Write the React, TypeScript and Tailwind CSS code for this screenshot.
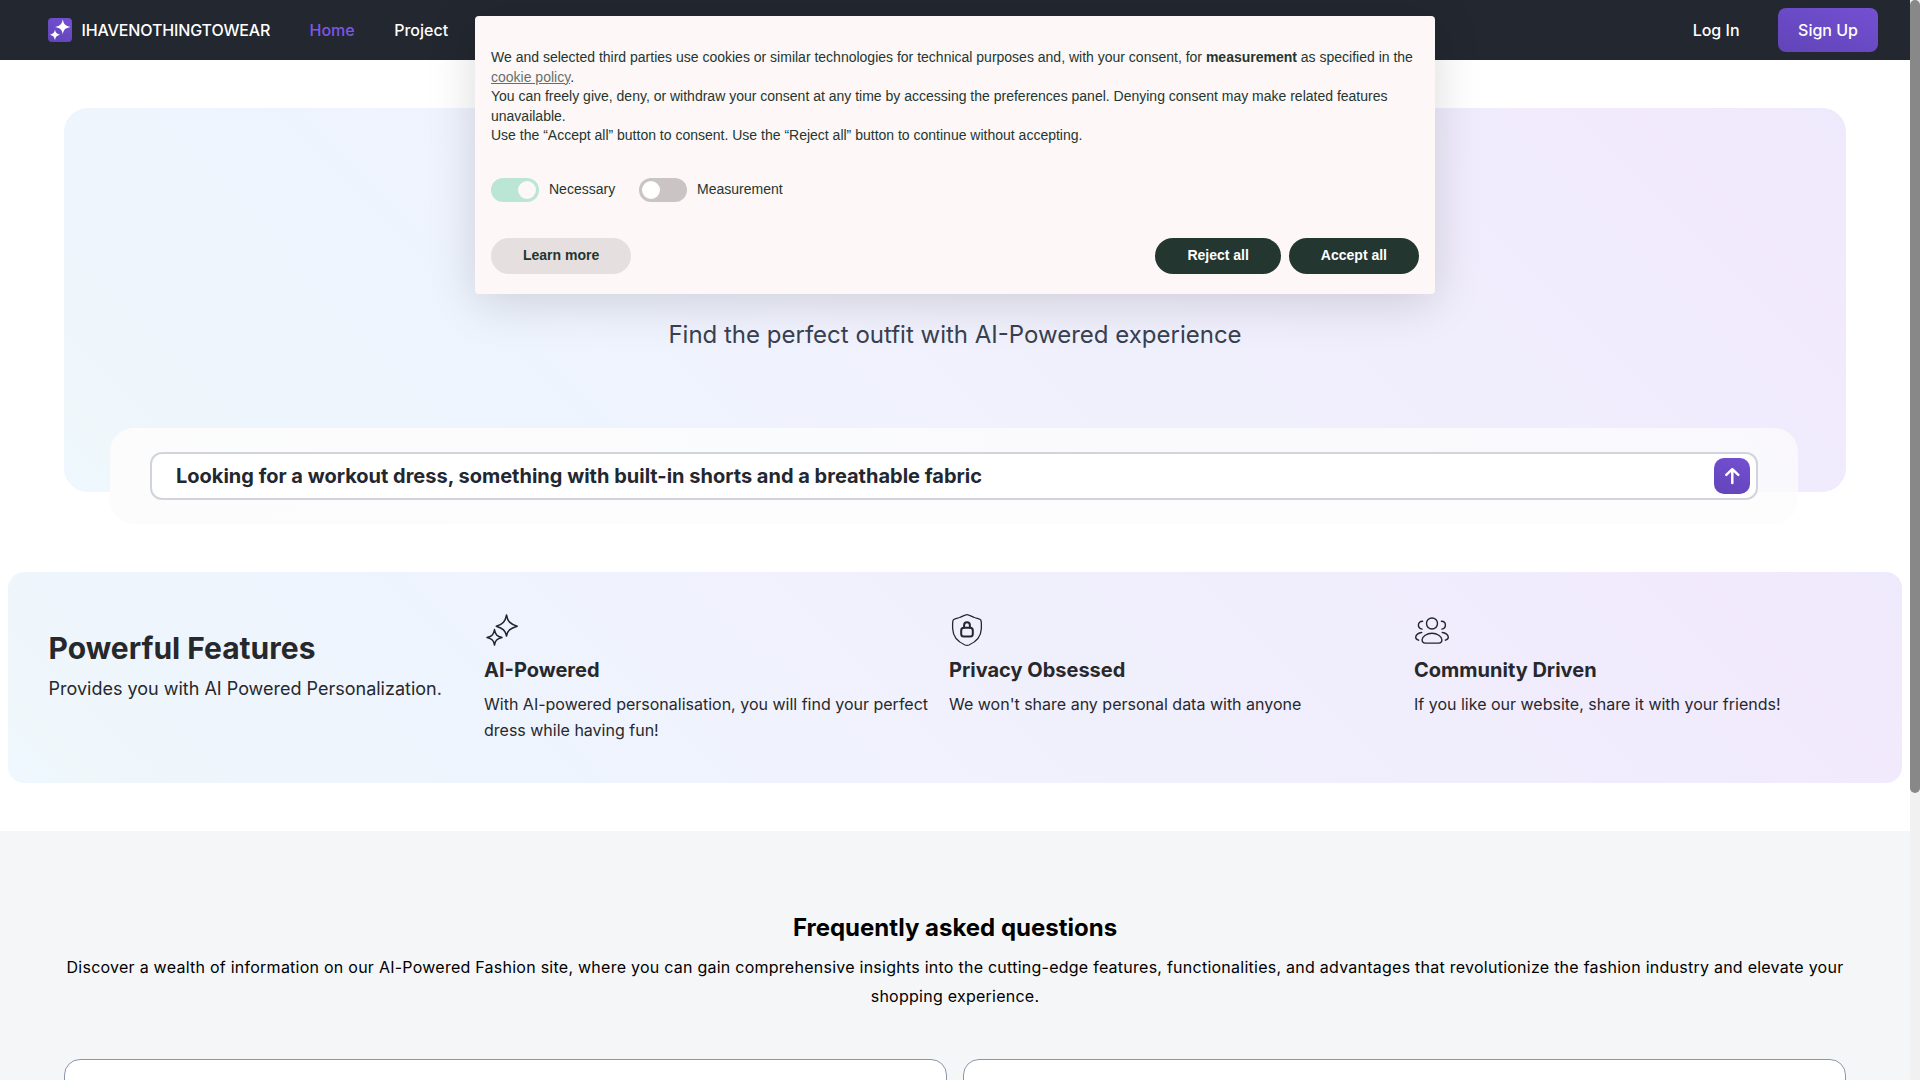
import type { ReactNode } from "react";

const panelGradient =
  "bg-[linear-gradient(45deg,#eef8fe_0%,#eff7fb_4%,#eef6fd_12%,#eef4fd_28%,#f0f2fd_42%,#f0effc_60%,#f0ecfd_80%,#f2eafc_90%,#efe9fd_100%)]";

function LogoMark() {
  return (
    <span className="flex size-6 items-center justify-center rounded-[4px] bg-[linear-gradient(20deg,#6244b8,#7350d2)]">
      <svg viewBox="0 0 24 24" className="size-6" fill="#fff">
        <path d="M14.8 1.3C15.5 5.9 17.2 7.9 22.6 8.9C17.2 9.8 15.5 11.7 14.8 16.4C14.1 11.7 12.2 9.8 7.1 8.9C12.2 7.9 14.1 5.9 14.8 1.3Z" />
        <path d="M7 11.2C7.5 14.6 8.7 15.9 12.5 16.7C8.7 17.4 7.5 18.9 7 22.5C6.5 18.9 5.2 17.4 1.5 16.7C5.2 15.9 6.5 14.6 7 11.2Z" />
      </svg>
    </span>
  );
}

function SparkleIcon() {
  return (
    <svg viewBox="0 0 36 36" className="size-9" fill="none" stroke="#22262f" strokeWidth="1.5" strokeLinejoin="round">
      <path d="M22.5 3C23.6 9.3 26 12 33.2 14.2C26 16.4 23.6 18.6 22.5 24C21.4 18.6 19 16.4 12.3 14.2C19 12 21.4 9.3 22.5 3Z" />
      <path d="M10.5 17.6C11.3 22.4 12.9 24.3 18 25.5C12.9 26.7 11.3 28.5 10.5 33C9.7 28.5 8.1 26.7 3 25.5C8.1 24.3 9.7 22.4 10.5 17.6Z" />
    </svg>
  );
}

function ShieldLockIcon() {
  return (
    <svg viewBox="0 0 36 36" className="size-9" fill="none" stroke="#22262f" strokeLinecap="round" strokeLinejoin="round">
      <path
        strokeWidth="1.3"
        d="M18 2.7C16.4 2.7 13.5 4.3 10.5 5.5C7.5 6.6 4.8 6.8 4.2 8C3.5 9.7 3.5 13 3.7 17C4.1 26.4 11.5 31 16 33C17.3 33.5 18.7 33.5 20 33C24.5 31 31.9 26.4 32.3 17C32.5 13 32.5 9.7 31.8 8C31.2 6.8 28.5 6.6 25.5 5.5C22.5 4.3 19.6 2.7 18 2.7Z"
      />
      <rect x="12.2" y="15.8" width="11.6" height="8.8" rx="2.6" strokeWidth="2" />
      <path strokeWidth="2" d="M15.1 15.4V13.2A2.9 3 0 0 1 20.9 13.2V15.4" />
    </svg>
  );
}

function CommunityIcon() {
  return (
    <svg viewBox="0 0 36 36" className="size-9" fill="none" stroke="#22262f" strokeWidth="1.4" strokeLinecap="round">
      <circle cx="18" cy="11.5" r="5.5" />
      <path d="M18 21.2C23 21.2 27.9 24.5 27.9 27.7C27.9 29.6 26.5 31.1 24.6 31.1H11.4C9.5 31.1 8.1 29.6 8.1 27.7C8.1 24.5 13 21.2 18 21.2Z" />
      <path d="M8.6 9.2C6.2 9.2 4.4 10.9 4.4 13.1C4.4 15.2 5.9 16.9 8.1 17.1" />
      <path d="M27.4 9.2C29.8 9.2 31.4 10.9 31.4 13.1C31.4 15.2 30 16.9 27.9 17.1" />
      <path d="M7.7 20.5C4.4 20.8 1.7 23 1.7 25.3C1.7 26.7 2.8 27.7 4.6 28.2" />
      <path d="M28.3 20.5C31.6 20.8 34.3 23 34.3 25.3C34.3 26.7 33.2 27.7 31.4 28.2" />
    </svg>
  );
}

function Feature({ icon, title, text }: { icon: ReactNode; title: string; text: string }) {
  return (
    <div className="flex flex-col text-[#27282c]">
      {icon}
      <h3 className="mt-2 text-xl font-bold">{title}</h3>
      <p className="mt-[7px] text-base leading-[26px]">{text}</p>
    </div>
  );
}

function CookieBanner() {
  return (
    <div className="absolute left-[475px] top-4 flex h-[278px] w-[960px] flex-col rounded-[4px] bg-[#fdf7f7] px-4 pt-8 font-['Liberation_Sans',Arial,sans-serif] text-sm text-[#233630] shadow-[0_8px_48px_rgba(0,0,0,0.15)]">
      <div className="leading-[19.6px]">
        <p>
          We and selected third parties use cookies or similar technologies for technical purposes and, with your
          consent, for <strong>measurement</strong> as specified in the{" "}
          <a className="underline opacity-70">cookie policy</a>.
        </p>
        <p>
          You can freely give, deny, or withdraw your consent at any time by accessing the preferences panel. Denying
          consent may make related features unavailable.
        </p>
        <p>Use the “Accept all” button to consent. Use the “Reject all” button to continue without accepting.</p>
      </div>
      <div className="mt-8 flex h-6 items-center">
        <span className="flex h-6 w-12 items-center justify-end rounded-full bg-[#bbe6d5] px-[3px]">
          <span className="size-[18px] rounded-full bg-[#fdf7f7]" />
        </span>
        <span className="ml-[10px] w-20 -translate-y-px">Necessary</span>
        <span className="ml-[10px] flex h-6 w-12 items-center rounded-full bg-[#cac4c4] px-[3px]">
          <span className="size-[18px] rounded-full bg-white" />
        </span>
        <span className="ml-[10px] -translate-y-px">Measurement</span>
      </div>
      <div className="mt-9 flex gap-2 font-bold">
        <button className="mr-auto h-9 rounded-full bg-[#e5dfdf] px-8 pb-0.5">Learn more</button>
        <button className="h-9 rounded-full bg-[#233630] px-8 pb-0.5 text-white">Reject all</button>
        <button className="h-9 rounded-full bg-[#233630] px-8 pb-0.5 text-white">Accept all</button>
      </div>
    </div>
  );
}

export default function App() {
  return (
    <div className="relative flex h-[1080px] w-[1920px] overflow-hidden bg-white font-['Inter',sans-serif]">
      <div className="flex w-[1910px] shrink-0 flex-col">
        <header className="flex h-[60px] shrink-0 items-center bg-[#23272f] pl-12 pr-8 font-medium text-white">
          <LogoMark />
          <span className="ml-[9.5px] w-[189px] tracking-[-0.13px]">IHAVENOTHINGTOWEAR</span>
          <a className="ml-[39px] text-[#7f56e4]">Home</a>
          <a className="ml-[39.5px]">Project</a>
          <a className="ml-auto">Log In</a>
          <a className="ml-[38.5px] flex h-11 w-[100px] items-center justify-center rounded-lg bg-[linear-gradient(20deg,#6244b8,#7350d2)]">
            Sign Up
          </a>
        </header>

        <section className={`mx-16 mt-12 flex h-[384px] shrink-0 flex-col items-center rounded-3xl ${panelGradient}`}>
          <p className="mt-[211px] text-2xl text-[#374151]">Find the perfect outfit with AI-Powered experience</p>
          <div className="mt-[77px] h-24 w-[1688px] -translate-x-px shrink-0 rounded-3xl bg-[linear-gradient(90deg,#fcfcfc,#fcfcfcbf)] px-10 py-6">
            <div className="flex h-12 items-center justify-between rounded-xl border-2 border-[#d1d5db] bg-white pl-6 pr-1.5">
              <span className="text-xl font-bold text-[#23272f]">
                Looking for a workout dress, something with built-in shorts and a breathable fabric
              </span>
              <button className="flex size-9 items-center justify-center rounded-[10px] bg-[linear-gradient(20deg,#6244b8,#7350d2)]">
                <svg viewBox="0 0 18 18" className="size-[18px]" fill="none" stroke="#fff" strokeWidth="2.5" strokeLinecap="round" strokeLinejoin="round">
                  <path d="M9.3 16V2.5M3.3 7.8L9.3 2.2L15.3 7.8" />
                </svg>
              </button>
            </div>
          </div>
        </section>

        <section className={`mx-2 mt-20 flex h-[211px] shrink-0 rounded-2xl px-10 pt-10 ${panelGradient}`}>
          <div className="w-[436px] shrink-0 pl-[0.5px] pt-[18px] text-[#27282c]">
            <h2 className="text-3xl font-bold leading-9">Powerful Features</h2>
            <p className="mt-[9px] text-lg">Provides you with AI Powered Personalization.</p>
          </div>
          <div className="-mr-px grid flex-1 grid-cols-3 gap-4">
            <Feature
              icon={<SparkleIcon />}
              title="AI-Powered"
              text="With AI-powered personalisation, you will find your perfect dress while having fun!"
            />
            <Feature
              icon={<ShieldLockIcon />}
              title="Privacy Obsessed"
              text="We won't share any personal data with anyone"
            />
            <Feature
              icon={<CommunityIcon />}
              title="Community Driven"
              text="If you like our website, share it with your friends!"
            />
          </div>
        </section>

        <section className="mt-12 flex-1 bg-[#f5f6f8] px-16 pt-[81px] text-center text-black">
          <h2 className="text-2xl font-bold">Frequently asked questions</h2>
          <p className="mt-[9px] leading-[28.8px] tracking-[0.25px]">
            Discover a wealth of information on our AI-Powered Fashion site, where you can gain comprehensive insights
            into the cutting-edge features, functionalities, and advantages that revolutionize the fashion industry and
            elevate your shopping experience.
          </p>
          <div className="mt-12 grid grid-cols-2 gap-4">
            <div className="h-24 rounded-2xl border border-[#8b95ab] bg-white" />
            <div className="h-24 rounded-2xl border border-[#8b95ab] bg-white" />
          </div>
        </section>
      </div>

      <div className="w-[10px] shrink-0 bg-[#f1f1f1]">
        <div className="h-[793px] rounded-[5px] bg-[#888]" />
      </div>

      <CookieBanner />
    </div>
  );
}
